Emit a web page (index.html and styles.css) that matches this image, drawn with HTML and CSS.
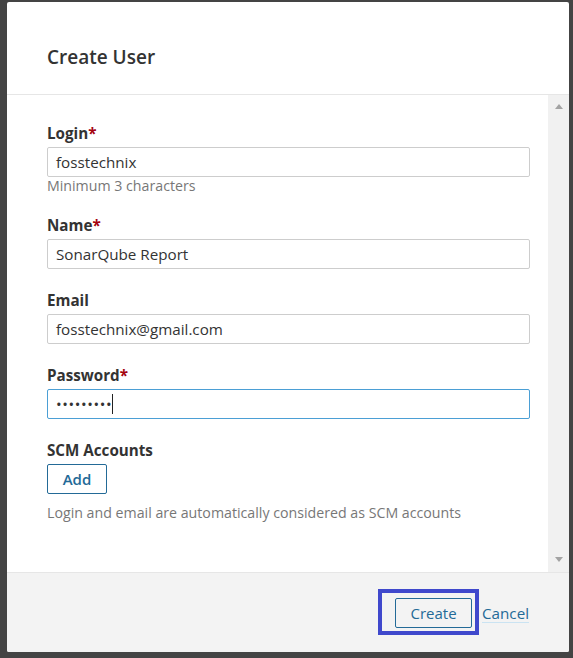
FILE: index.html
```html
<!DOCTYPE html>
<html lang="en">
<head>
<meta charset="utf-8">
<title>Create User</title>
<link rel="stylesheet" href="styles.css">
</head>
<body>
<div class="page">
  <div class="modal">
    <header class="modal-header">
      <h2 class="modal-title">Create User</h2>
    </header>
    <div class="modal-body">
      <div class="modal-content">
        <div class="field">
          <label class="label">Login<em class="req">*</em></label>
          <div class="input">fosstechnix</div>
          <div class="hint">Minimum 3 characters</div>
        </div>
        <div class="field">
          <label class="label">Name<em class="req">*</em></label>
          <div class="input">SonarQube Report</div>
        </div>
        <div class="field">
          <label class="label">Email</label>
          <div class="input">fosstechnix@gmail.com</div>
        </div>
        <div class="field">
          <label class="label">Password<em class="req">*</em></label>
          <div class="input input-focus"><span class="dots">•••••••••</span><span class="caret"></span></div>
        </div>
        <div class="field">
          <label class="label">SCM Accounts</label>
          <button class="btn btn-add">Add</button>
          <div class="hint hint-scm">Login and email are automatically considered as SCM accounts</div>
        </div>
      </div>
      <div class="scrollbar">
        <span class="arrow arrow-up"></span>
        <span class="arrow arrow-down"></span>
      </div>
    </div>
    <footer class="modal-footer">
      <button class="btn btn-create">Create</button>
      <a class="link-cancel" href="#">Cancel</a>
      <span class="highlight"></span>
    </footer>
  </div>
</div>
</body>
</html>
```
FILE: styles.css
```css
* { box-sizing: border-box; }
html, body { margin: 0; padding: 0; }
body {
  background: #444444;
  font-family: "Open Sans", "Noto Sans", sans-serif;
  color: #333;
  width: 573px;
  height: 658px;
  overflow: hidden;
}
.page {
  padding: 2px 0 0 7px;
}
.modal {
  width: 562px;
  height: 650px;
  background: #fff;
  border-radius: 2px;
  display: flex;
  flex-direction: column;
  overflow: hidden;
}
.modal-header {
  height: 93px;
  padding: 41px 40px 0;
  border-bottom: 1px solid #e6e6e6;
}
.modal-title {
  margin: 0;
  font-size: 19px;
  line-height: 28px;
  font-weight: 600;
  color: #333;
}
.modal-body {
  flex: 1;
  display: flex;
}
.modal-content {
  flex: 1;
  padding: 28px 18px 0 40px;
}
.field { margin-bottom: 21px; }
.label {
  display: block;
  font-size: 15.2px;
  line-height: 20px;
  font-weight: 700;
  color: #333;
  margin-bottom: 4px;
}
.req {
  font-style: normal;
  color: #a4030f;
  font-weight: 700;
}
.input {
  height: 30px;
  border: 1px solid #cdcdcd;
  border-radius: 2px;
  padding: 0 8px;
  font-size: 15.2px;
  line-height: 28px;
  color: #333;
  display: flex;
  align-items: center;
}
.input-focus { border-color: #4b9fd5; }
.dots { letter-spacing: 0.6px; font-size: 15px; color: #333; }
.caret {
  display: inline-block;
  width: 1px;
  height: 20px;
  background: #222;
  margin-left: 0;
}
.hint {
  font-size: 14.2px;
  line-height: 17px;
  color: #777;
}
.hint-scm { margin-top: 10px; }
.btn {
  font-family: inherit;
  height: 30px;
  border: 1px solid #236a97;
  border-radius: 2px;
  background: transparent;
  color: #236a97;
  font-size: 15px;
  font-weight: 600;
  padding: 0;
  cursor: pointer;
}
.btn-add { width: 60px; display: block; }
.scrollbar {
  width: 21px;
  background: #f1f1f1;
  display: flex;
  flex-direction: column;
  justify-content: space-between;
  align-items: center;
  padding: 9px 0 10px;
}
.arrow {
  width: 0; height: 0;
  border-left: 4.5px solid transparent;
  border-right: 4.5px solid transparent;
  margin-left: 1px;
}
.arrow-up { border-bottom: 5px solid #a3a3a3; }
.arrow-down { border-top: 5px solid #a3a3a3; }
.modal-footer {
  position: relative;
  height: 80px;
  background: #f3f3f3;
  border-top: 1px solid #e6e6e6;
  display: flex;
  justify-content: flex-end;
  align-items: center;
  gap: 10px;
  padding: 1px 40px 0 0;
}
.btn-create {
  width: 77px;
  font-weight: 400;
  color: #236a97;
}
.link-cancel {
  color: #236a97;
  text-decoration: none;
  font-size: 15.2px;
  line-height: 18px;
  border-bottom: 1px solid #cae3f2;
}
.highlight {
  position: absolute;
  left: 371px;
  top: 16px;
  width: 101px;
  height: 46px;
  border: 4px solid #3f48cc;
  pointer-events: none;
}
```
